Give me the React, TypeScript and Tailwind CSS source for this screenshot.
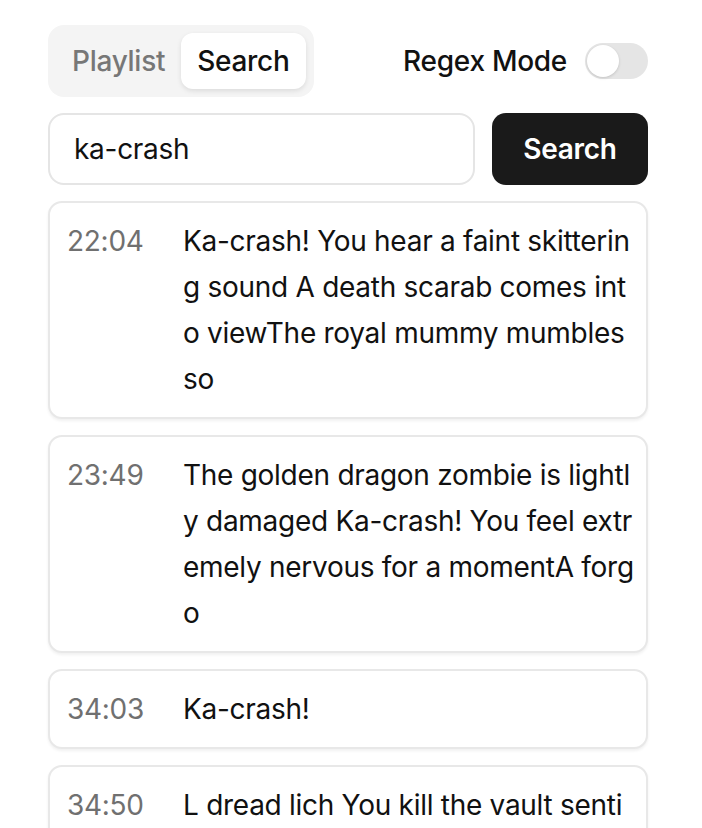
import { useState } from 'react';

type Hit = { time: string; text: string };

const hits: Hit[] = [
  { time: '22:04', text: 'Ka-crash! You hear a faint skittering sound A death scarab comes into viewThe royal mummy mumbles so' },
  { time: '23:49', text: 'The golden dragon zombie is lightly damaged Ka-crash! You feel extremely nervous for a momentA forgo' },
  { time: '34:03', text: 'Ka-crash!' },
  { time: '34:50', text: 'L dread lich You kill the vault sentinel Ka-crash! You hear a faint sound' },
];

export default function App() {
  const [tab, setTab] = useState<'playlist' | 'search'>('search');
  const [query, setQuery] = useState('ka-crash');
  const [regex, setRegex] = useState(false);

  return (
    <div className="min-h-screen bg-white font-['Inter',sans-serif] text-[28px] tracking-[-0.01em] text-[#111]">
      <div className="ml-[48px] w-[600px] pt-[25px]">
        <div className="flex items-center justify-between">
          <div className="flex rounded-[16px] bg-[#f4f4f4] p-2">
            <button
              onClick={() => setTab('playlist')}
              className={`h-14 rounded-[12px] px-4 font-medium ${tab === 'playlist' ? 'bg-white text-[#111] shadow-[0_2px_5px_rgba(0,0,0,0.1)]' : 'text-[#777]'}`}
            >
              Playlist
            </button>
            <button
              onClick={() => setTab('search')}
              className={`h-14 rounded-[12px] px-4 font-medium ${tab === 'search' ? 'bg-white text-[#111] shadow-[0_2px_5px_rgba(0,0,0,0.1)]' : 'text-[#777]'}`}
            >
              Search
            </button>
          </div>
          <div className="flex items-center gap-[18px]">
            <span className="font-medium">Regex Mode</span>
            <button
              onClick={() => setRegex(!regex)}
              className={`flex h-9 w-[63px] items-center rounded-full p-[2px] ${regex ? 'justify-end bg-[#1a1a1a]' : 'justify-start bg-[#e5e5e5]'}`}
            >
              <span className="h-8 w-8 rounded-full bg-white shadow-[0_1px_3px_rgba(0,0,0,0.15)]" />
            </button>
          </div>
        </div>

        <div className="mt-4 flex gap-[17px]">
          <input
            value={query}
            onChange={(e) => setQuery(e.target.value)}
            className="h-[72px] w-0 min-w-0 flex-1 rounded-[16px] border-2 border-[#e5e5e5] px-[24px] text-[#111] outline-none"
          />
          <button className="h-[72px] w-[156px] shrink-0 rounded-[14px] bg-[#1a1a1a] font-semibold text-white">
            Search
          </button>
        </div>

        <div className="mt-4 flex flex-col gap-4">
          {hits.map((h) => (
            <div
              key={h.time}
              className="flex rounded-[14px] border-2 border-[#e8e8e8] bg-white py-[15px] pl-[17px] pr-[12px] leading-[46px] shadow-[0_2px_3px_rgba(0,0,0,0.06)]"
            >
              <span className="w-[116px] shrink-0 text-[#707070]">{h.time}</span>
              <span className="min-w-0 break-all">{h.text}</span>
            </div>
          ))}
        </div>
      </div>
    </div>
  );
}
